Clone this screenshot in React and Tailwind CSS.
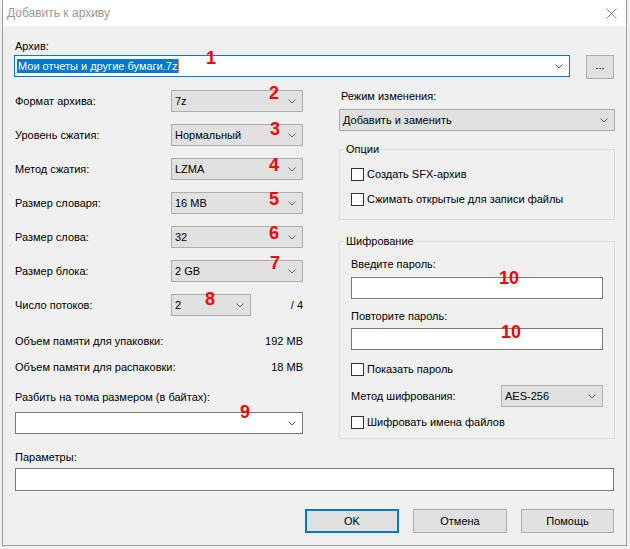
import React from "react";

function Chevron() {
  return (
    <svg width="8" height="5" viewBox="0 0 8 5" className="shrink-0">
      <path d="M0.5 0.5 L4 4 L7.5 0.5" fill="none" stroke="#606060" strokeWidth="1" />
    </svg>
  );
}

function Select({ value, className = "" }) {
  return (
    <div className={`flex h-[22px] items-center justify-between border border-[#adadad] bg-[#e1e1e1] pl-[3px] pr-[6px] ${className}`}>
      <span>{value}</span>
      <Chevron />
    </div>
  );
}

function Check({ label }) {
  return (
    <div className="flex h-[15px] items-center">
      <span className="h-[13px] w-[13px] shrink-0 border border-[#333333] bg-white" />
      <span className="ml-[3px]">{label}</span>
    </div>
  );
}

function Row({ label, value }) {
  return (
    <div className="flex h-[22px] items-center justify-between">
      <span>{label}</span>
      <Select value={value} className="w-[132px]" />
    </div>
  );
}

const marks = [
  { t: "1", x: 206, y: 49 },
  { t: "2", x: 269, y: 84 },
  { t: "3", x: 270, y: 120 },
  { t: "4", x: 269, y: 156 },
  { t: "5", x: 269, y: 190 },
  { t: "6", x: 269, y: 224 },
  { t: "7", x: 270, y: 254 },
  { t: "8", x: 205, y: 290 },
  { t: "9", x: 240, y: 403 },
  { t: "10", x: 499, y: 269 },
  { t: "10", x: 501, y: 323 },
];

export default function App() {
  return (
    <div className="relative h-[549px] w-[630px] overflow-hidden bg-[#f0f0f0] font-['Liberation_Sans',Arial,sans-serif] text-[11px] leading-[15px] text-black">
      <div className="ml-[2px] flex h-[546px] w-[625px] flex-col border-x border-b border-[#9b9b9b] bg-[#f0f0f0]">
        {/* title bar */}
        <div className="flex h-[26px] items-center justify-between bg-white pl-[4px] pr-[9px]">
          <span className="text-[12px] text-[#999999]">Добавить к архиву</span>
          <svg width="11" height="11" viewBox="0 0 11 11">
            <path d="M0.5 0.5 L10.5 10.5 M10.5 0.5 L0.5 10.5" stroke="#8a8a8a" strokeWidth="1" />
          </svg>
        </div>

        <div className="flex flex-col pl-[12px] pr-[11px] pt-[13px]">
          {/* archive */}
          <div className="h-[15px]">Архив:</div>
          <div className="mt-px flex items-start">
            <div className="-ml-px flex h-[22px] w-[556px] items-center justify-between border border-[#0078d7] bg-white pl-[2px] pr-[6px]">
              <span className="border-r border-[#e08a3a] bg-[#0078d7] pl-px pr-px leading-[14px] text-white">
                Мои отчеты и другие бумаги.7z
              </span>
              <Chevron />
            </div>
            <div className="ml-[16px] flex h-[24px] w-[28px] items-center justify-center border border-[#adadad] bg-[#e1e1e1] pb-[3px]">
              ...
            </div>
          </div>

          {/* two columns */}
          <div className="mt-[10px] flex items-start">
            <div className="flex w-[288px] flex-col pt-px">
              <div className="flex flex-col gap-[12px]">
                <Row label="Формат архива:" value="7z" />
                <Row label="Уровень сжатия:" value="Нормальный" />
                <Row label="Метод сжатия:" value="LZMA" />
                <Row label="Размер словаря:" value="16 MB" />
                <Row label="Размер слова:" value="32" />
                <Row label="Размер блока:" value="2 GB" />
                <div className="flex h-[22px] items-center">
                  <span className="w-[156px]">Число потоков:</span>
                  <Select value="2" className="w-[80px]" />
                  <span className="flex-1 text-right">/ 4</span>
                </div>
              </div>
              <div className="mt-[18px] flex justify-between">
                <span>Объем памяти для упаковки:</span>
                <span>192 MB</span>
              </div>
              <div className="mt-[11px] flex justify-between">
                <span>Объем памяти для распаковки:</span>
                <span>18 MB</span>
              </div>
              <div className="mt-[15px]">Разбить на тома размером (в байтах):</div>
              <div className="mt-[7px] flex h-[22px] items-center justify-end border border-[#7a7a7a] bg-white pr-[6px]">
                <Chevron />
              </div>
            </div>

            <div className="ml-[36px] flex w-[276px] flex-col">
              <div className="pl-[2px]">Режим изменения:</div>
              <Select value="Добавить и заменить" className="mt-[5px]" />

              <fieldset className="mt-[11px] border border-[#dcdcdc] pb-[12px]">
                <legend className="ml-[4px] px-[2px]">Опции</legend>
                <div className="flex flex-col gap-[10px] pl-[11px] pt-[10px]">
                  <Check label="Создать SFX-архив" />
                  <Check label="Сжимать открытые для записи файлы" />
                </div>
              </fieldset>

              <fieldset className="mt-[14px] border border-[#dcdcdc] pb-[8px]">
                <legend className="ml-[4px] px-[2px]">Шифрование</legend>
                <div className="flex flex-col px-[11px] pt-[8px]">
                  <div>Введите пароль:</div>
                  <div className="mt-[5px] h-[22px] border border-[#7a7a7a] bg-white" />
                  <div className="mt-[10px]">Повторите пароль:</div>
                  <div className="mt-[4px] h-[22px] border border-[#7a7a7a] bg-white" />
                  <div className="mt-[12px]">
                    <Check label="Показать пароль" />
                  </div>
                  <div className="mt-[8px] flex items-center justify-between">
                    <span>Метод шифрования:</span>
                    <Select value="AES-256" className="w-[102px]" />
                  </div>
                  <div className="mt-[8px]">
                    <Check label="Шифровать имена файлов" />
                  </div>
                </div>
              </fieldset>
            </div>
          </div>

          {/* parameters */}
          <div className="mt-[11px]">Параметры:</div>
          <div className="mr-px mt-[3px] h-[23px] border border-[#7a7a7a] bg-white" />

          <div className="mr-px mt-[18px] flex justify-end gap-[14px]">
            <div className="flex h-[24px] w-[94px] items-center justify-center border-2 border-[#0078d7] bg-[#e1e1e1]">
              OK
            </div>
            <div className="flex h-[24px] w-[94px] items-center justify-center border border-[#adadad] bg-[#e1e1e1]">
              Отмена
            </div>
            <div className="flex h-[24px] w-[93px] items-center justify-center border border-[#adadad] bg-[#e1e1e1]">
              Помощь
            </div>
          </div>
        </div>
      </div>

      {marks.map((m, i) => (
        <span
          key={i}
          className="absolute text-[18px] font-bold leading-[18px] text-[#ff0000]"
          style={{ left: m.x, top: m.y }}
        >
          {m.t}
        </span>
      ))}
    </div>
  );
}
